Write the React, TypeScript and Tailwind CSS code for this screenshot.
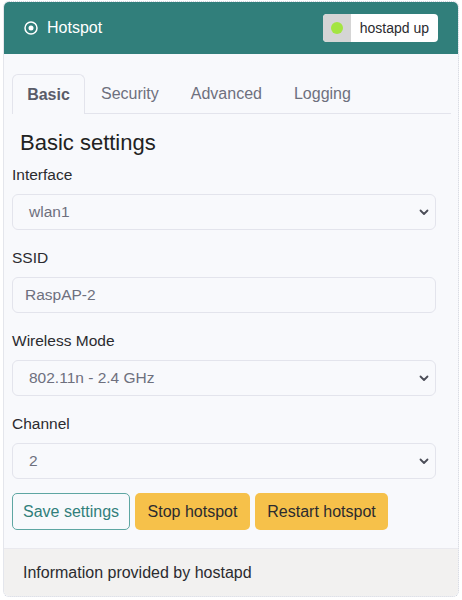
import { useState } from "react";

const tabs = ["Basic", "Security", "Advanced", "Logging"];

function Chevron() {
  return (
    <svg width="10" height="7" viewBox="0 0 10 7" className="shrink-0">
      <path d="M1.5 1.5 L5 5 L8.5 1.5" fill="none" stroke="#4b4d57" strokeWidth="1.8" strokeLinecap="round" strokeLinejoin="round" />
    </svg>
  );
}

function SelectBox({ value }: { value: string }) {
  return (
    <div className="flex h-[36px] w-[424px] items-center justify-between rounded-[6px] border border-[#e3e4ec] bg-[#f8f9fc] pl-4 pr-[6px] text-[15.5px] text-[#6e707e]">
      <span>{value}</span>
      <Chevron />
    </div>
  );
}

function Field({ label, children }: { label: string; children: React.ReactNode }) {
  return (
    <div className="mb-[17px]">
      <div className="mb-[8px] text-[15.5px] leading-[22px] text-[#2b2b2f]">{label}</div>
      {children}
    </div>
  );
}

export default function App() {
  const [active, setActive] = useState("Basic");

  return (
    <div className="h-[600px] w-[462px] bg-white pl-[3px] pt-[1px] font-['Liberation_Sans',Arial,sans-serif]">
      <div className="w-[456px] overflow-hidden rounded-[6px] border border-dotted border-[#cfd3dc] bg-[#f8f9fc]">
        <div className="flex h-[52px] items-center justify-between bg-[#317f7b] pl-[20px] pr-[19px]">
          <div className="flex items-center gap-[9px] text-[16px] text-white">
            <svg width="14" height="14" viewBox="0 0 14 14">
              <circle cx="7" cy="7" r="6" fill="none" stroke="white" strokeWidth="1.5" />
              <circle cx="7" cy="7" r="2.5" fill="white" />
            </svg>
            <span>Hotspot</span>
          </div>
          <div className="mr-[1px] flex h-[28px] overflow-hidden rounded-[4px] bg-white">
            <div className="flex w-[28px] items-center justify-center bg-[#d5d5d5]">
              <span className="h-[12px] w-[12px] rounded-full bg-[#a4e541]" />
            </div>
            <div className="flex items-center px-[9px] text-[14px] text-[#2b2b2f]">hostapd up</div>
          </div>
        </div>

        <div className="pl-[8px] pt-[20px]">
          <div className="mr-[7px] flex h-[40px] border-b border-[#e3e4ec]">
            {tabs.map((t) => (
              <button
                key={t}
                onClick={() => setActive(t)}
                className={
                  t === active
                    ? "-mb-px w-[73px] rounded-t-[6px] border border-b-0 border-[#e3e4ec] bg-[#f8f9fc] text-[16px] font-bold text-[#5a5c69]"
                    : "px-[16px] text-[16px] text-[#6e707e]"
                }
              >
                {t}
              </button>
            ))}
          </div>

          <h2 className="mb-[7px] ml-[8px] mt-[15px] text-[22px] leading-[28px] text-[#222]">Basic settings</h2>

          <Field label="Interface">
            <SelectBox value="wlan1" />
          </Field>
          <Field label="SSID">
            <div className="flex h-[36px] w-[424px] items-center rounded-[6px] border border-[#e3e4ec] bg-[#f8f9fc] pl-[12px] text-[15.5px] text-[#6e707e]">
              RaspAP-2
            </div>
          </Field>
          <Field label="Wireless Mode">
            <SelectBox value="802.11n - 2.4 GHz" />
          </Field>
          <Field label="Channel">
            <SelectBox value="2" />
          </Field>

          <div className="-mt-[3px] flex gap-[5px] pb-[18px]">
            <button className="h-[37px] w-[118px] rounded-[5px] border border-[#5ea6a2] text-[16px] text-[#317f7b]">
              Save settings
            </button>
            <button className="h-[37px] w-[115px] rounded-[5px] bg-[#f6c14a] text-[16px] text-[#2b2b2f]">
              Stop hotspot
            </button>
            <button className="h-[37px] w-[133px] rounded-[5px] bg-[#f6c14a] text-[16px] text-[#2b2b2f]">
              Restart hotspot
            </button>
          </div>
        </div>

        <div className="flex h-[48px] items-center border-t border-[#e9e9ee] bg-[#f2f1f0] pl-[19px] text-[16px] text-[#2b2b2f]">
          Information provided by hostapd
        </div>
      </div>
    </div>
  );
}
